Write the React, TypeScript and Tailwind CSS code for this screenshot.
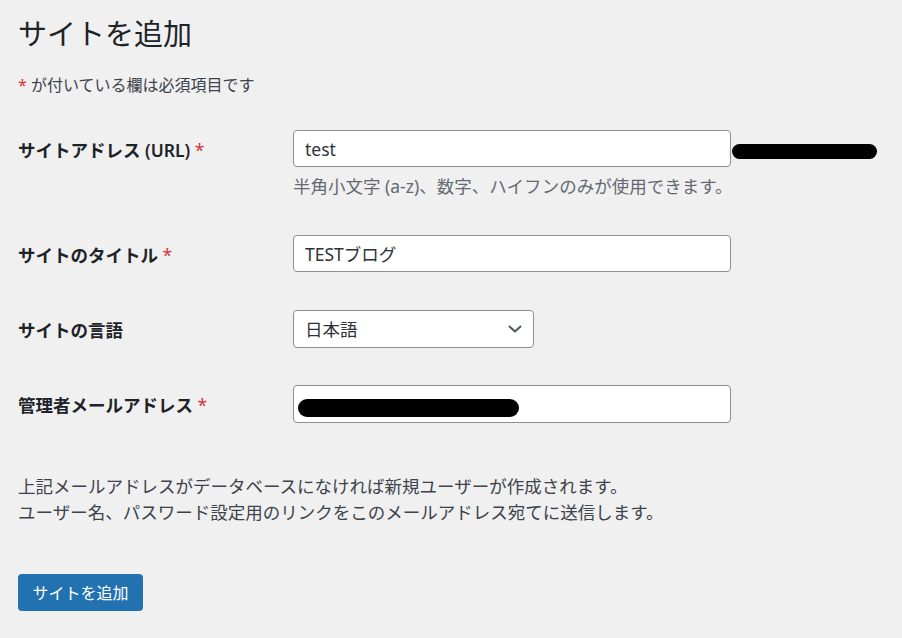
import React from "react";

const FONT = '"Noto Sans", "Noto Sans CJK JP", sans-serif';

function Req() {
  return <span className="text-[#d63638] font-normal"> *</span>;
}

function Row({ label, required, children }: { label: string; required?: boolean; children: React.ReactNode }) {
  return (
    <div className="flex items-start">
      <div className="h-[37px] w-[275px] shrink-0 pt-[4px] text-[17.5px] leading-[33px] font-semibold text-[#1d2327]">
        {label}
        {required && <Req />}
      </div>
      <div className="flex flex-col">{children}</div>
    </div>
  );
}

export default function App() {
  return (
    <div
      className="min-h-[638px] w-full bg-[#f0f0f1] px-[18px] pt-[16px] text-[#1d2327]"
      style={{ fontFamily: FONT }}
    >
      <h1 className="text-[29px] leading-[36px] font-normal">サイトを追加</h1>

      <p className="mt-[21px] text-[16px] leading-[24px] text-[#3c434a]">
        <span className="text-[#d63638]">*</span> が付いている欄は必須項目です
      </p>

      <div className="mt-[33px] flex flex-col">
        <Row label="サイトアドレス (URL)" required>
          <div className="flex items-center">
            <input
              readOnly
              value="test"
              className="h-[37px] w-[438px] rounded-[4px] border border-[#8c8f94] bg-white px-[11px] text-[17.5px] text-[#2c3338] outline-none"
              style={{ fontFamily: FONT }}
            />
            <span className="ml-[1px] mt-[6px] block h-[15px] w-[145px] rounded-full bg-black" />
          </div>
          <p className="mt-[7px] text-[17.5px] leading-[24px] text-[#646970]">
            半角小文字 (a-z)、数字、ハイフンのみが使用できます。
          </p>
        </Row>

        <div className="mt-[37px]">
          <Row label="サイトのタイトル" required>
            <input
              readOnly
              value="TESTブログ"
              className="h-[37px] w-[438px] rounded-[4px] border border-[#8c8f94] bg-white px-[11px] text-[17.5px] text-[#2c3338] outline-none"
              style={{ fontFamily: FONT }}
            />
          </Row>
        </div>

        <div className="mt-[38px]">
          <Row label="サイトの言語">
            <div className="flex h-[38px] w-[241px] items-center justify-between rounded-[4px] border border-[#8c8f94] bg-white pl-[11px] pr-[10px] text-[17.5px] text-[#2c3338]">
              <span>日本語</span>
              <svg width="16" height="16" viewBox="0 0 16 16" fill="none">
                <path d="M2.5 5.5 L8 10.5 L13.5 5.5" stroke="#50575e" strokeWidth="2" strokeLinecap="round" strokeLinejoin="round" />
              </svg>
            </div>
          </Row>
        </div>

        <div className="mt-[37px]">
          <Row label="管理者メールアドレス" required>
            <div className="relative h-[38px] w-[438px] rounded-[4px] border border-[#8c8f94] bg-white">
              <span className="absolute left-[4px] top-[13px] block h-[18px] w-[221px] rounded-full bg-black" />
            </div>
          </Row>
        </div>
      </div>

      <div className="mt-[50px] text-[17.5px] leading-[26px] text-[#3c434a]">
        <p>上記メールアドレスがデータベースになければ新規ユーザーが作成されます。</p>
        <p>ユーザー名、パスワード設定用のリンクをこのメールアドレス宛てに送信します。</p>
      </div>

      <button
        className="mt-[49px] flex h-[37px] w-[125px] items-center justify-center rounded-[4px] bg-[#2271b1] text-[16px] text-white"
        style={{ fontFamily: FONT }}
      >
        サイトを追加
      </button>
    </div>
  );
}
